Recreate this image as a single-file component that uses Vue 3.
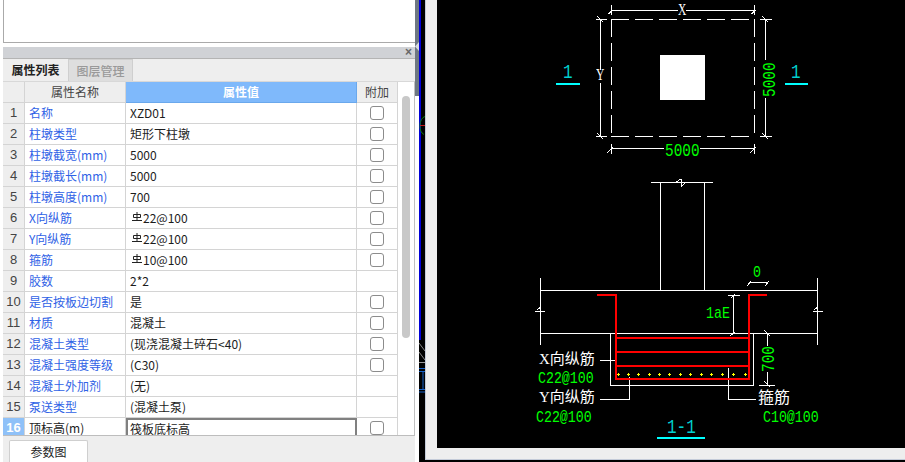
<script setup>
const rows = [
  ['名称', 'XZD01', true],
  ['柱墩类型', '矩形下柱墩', true],
  ['柱墩截宽(mm)', '5000', true],
  ['柱墩截长(mm)', '5000', true],
  ['柱墩高度(mm)', '700', true],
  ['X向纵筋', '22@100', true, true],
  ['Y向纵筋', '22@100', true, true],
  ['箍筋', '10@100', true, true],
  ['胶数', '2*2', false],
  ['是否按板边切割', '是', true],
  ['材质', '混凝土', true],
  ['混凝土类型', '(现浇混凝土碎石<40)', true],
  ['混凝土强度等级', '(C30)', true],
  ['混凝土外加剂', '(无)', false],
  ['泵送类型', '(混凝土泵)', false],
  ['顶标高(m)', '筏板底标高', true],
]
const dots = [618, 628, 638, 649, 659, 669, 680, 690, 701, 711, 722, 733, 745]
const labels = [
  { t: '1', x: 563, y: 63, c: 'cy' },
  { t: '1', x: 791, y: 63, c: 'cy' },
  { t: '1-1', x: 667, y: 418, c: 'cy' },
  { t: 'X', x: 678, y: 2, c: 'ltr' },
  { t: 'Y', x: 596, y: 67, c: 'ltr' },
  { t: '5000', x: 665, y: 142, c: 'g18' },
  { t: '5000', x: 761, y: 97, c: 'g18 rot' },
  { t: '0', x: 753, y: 264, c: 'g17' },
  { t: '1aE', x: 706, y: 305, c: 'g17' },
  { t: '700', x: 760, y: 372, c: 'g18 rot' },
  { t: 'X向纵筋', x: 539, y: 352, c: 'lab' },
  { t: 'C22@100', x: 538, y: 370, c: 'g17' },
  { t: 'Y向纵筋', x: 539, y: 390, c: 'lab' },
  { t: 'C22@100', x: 536, y: 409, c: 'g17' },
  { t: '箍筋', x: 758, y: 390, c: 'lab big' },
  { t: 'C10@100', x: 763, y: 409, c: 'g17' },
]
</script>

<template>
  <div class="page">
    <div class="left">
      <div class="topbox"></div>
      <div class="panel">
        <div class="titlebar"><span class="close">×</span></div>
        <div class="tabs">
          <div class="tab active">属性列表</div>
          <div class="tab">图层管理</div>
        </div>
        <div class="tablewrap">
          <div class="grid">
            <div class="row head">
              <div class="c num"></div>
              <div class="c name">属性名称</div>
              <div class="c val sel">属性值</div>
              <div class="c add">附加</div>
            </div>
            <div v-for="(r, i) in rows" :key="i" class="row" :class="{ last: i === 15 }">
              <div class="c num">{{ i + 1 }}</div>
              <div class="c name">{{ r[0] }}</div>
              <div class="c val">
                <svg v-if="r[3]" class="steel" width="10" height="10" viewBox="0 0 10 10">
                  <path d="M1.500 2.500h7v3h-7zM5 0v8M0 8.500h10" fill="none" stroke="#222" stroke-width="1"/>
                </svg>{{ r[1] }}
              </div>
              <div class="c add"><span v-if="r[2]" class="cb"></span></div>
            </div>
          </div>
          <div class="scroll"><div class="thumb"></div></div>
        </div>
        <div class="bottom"><div class="btab">参数图</div></div>
      </div>
    </div>
    <div class="splitter">
      <div class="splitcap">
        <svg width="4" height="9" viewBox="0 0 4 9"><path d="M4 0v9L0 4.500z" fill="#d8dce0"/></svg>
      </div>
    </div>
    <div class="behind">
      <div class="blue"></div>
      <svg class="bits" width="6" height="462" viewBox="0 0 6 462">
        <path d="M6 116.500a6 9 0 0 0-5 9 6 9 0 0 0 4 9" fill="none" stroke="#0a7d14"/>
        <path d="M1 125.500h5" stroke="#c21818"/>
        <path d="M0 343l6 8M0 352l6 8" stroke="#888"/>
        <path d="M0 362.500h6" stroke="#999"/>
        <path d="M0 368.500h6M0 371.500h6M4 371v19M0 389.500h6M0 392h6" stroke="#1560c8" fill="none"/>
      </svg>
    </div>
    <div class="frame">
      <div class="view">
        <svg class="cad" width="468" height="448" viewBox="437 0 468 448" shape-rendering="crispEdges">
          <g stroke="#fff" fill="none" stroke-width="1">
            <!-- plan: dashed outline -->
            <g stroke-dasharray="18 6">
              <path d="M611 19.500H755M611 136.500H755M611.500 19V137M754.500 19V137"/>
            </g>
            <rect x="660" y="55" width="45" height="45" fill="#fff" stroke="none"/>
            <!-- plan: dimensions -->
            <path d="M611.500 5v10M754.500 5v10M611 10.500H678M686 10.500H755"/>
            <path d="M608.500 14l4-4M751.500 14l4-4"/>
            <path d="M596 19.500h11M596 136.500h11M600.500 20V70M600.500 83V136"/>
            <path d="M597 16l6 6M597 133l6 6"/>
            <path d="M760 19.500h12M760 136.500h12M765.500 20V60M765.500 98V136"/>
            <path d="M762 16l6 6M762 133l6 6"/>
            <path d="M611.500 144v10M754.500 144v10M611 148.500H664M700 148.500H755"/>
            <path d="M607 153l6-6M750 153l6-6"/>
            <!-- section: column -->
            <path d="M651 182.500H713M660.500 183V290M704.500 183V290"/>
            <path d="M676 182l5-3M681 179v8M681 187l4-4" stroke-width="1"/>
            <!-- section: slab -->
            <path d="M540.500 278V345M817.500 278V345M541 290.500H817M541 333.500H817"/>
            <path d="M535 311.500h10M537 310l4-3M813 311.500h10M814 310l4-3"/>
            <path d="M610.500 333V385.500H753.500V333"/>
            <!-- dimension 0 -->
            <path d="M749 282.500h19M747 286l4-5M765 286l4-5"/>
            <!-- dimension 1aE -->
            <path d="M728 295.500h12M733.500 296V333"/>
            <path d="M731 298l4-4M730 336l5-4"/>
            <!-- leaders -->
            <path d="M600 360.500H616M600 399.500H629.500V377"/>
            <path d="M728.500 368V399.500H756"/>
            <!-- dimension 700 -->
            <path d="M767.500 333V346M767.500 372V385M759 385.500H775M764 330l6 6M764 381l6 6"/>
          </g>
          <!-- red rebar -->
          <g stroke="#f00" fill="none" stroke-width="2">
            <path d="M597 295H616V379H749V295H767"/>
            <path d="M616 338H749M616 352H749M616 366H749"/>
          </g>
          <g fill="#ff0">
            <path v-for="x in dots" :key="x" :d="`M${x - 1} 374h1v-1h1v1h1v1h-1v1h-1v-1h-1z`"/>
          </g>
          <!-- cyan section marks -->
          <g fill="#00ffff">
            <rect x="556" y="83" width="24" height="2"/>
            <rect x="785" y="83" width="23" height="2"/>
            <rect x="657" y="437" width="48" height="2"/>
          </g>
        </svg>
        <span
          v-for="(l, i) in labels"
          :key="i"
          class="t"
          :class="l.c"
          :style="{ left: l.x - 437 + 'px', top: l.y + 'px' }"
        >{{ l.t }}</span>
      </div>
    </div>
  </div>
</template>

<style>
html, body { margin: 0; background: #000; }
</style>

<style scoped>
.page {
  width: 905px;
  height: 462px;
  display: flex;
  overflow: hidden;
  background: #000;
  font-family: "Noto Sans CJK SC", "Liberation Sans", sans-serif;
  font-size: 12px;
}
.left {
  width: 415px;
  height: 462px;
  flex: none;
  background: #fff;
  padding-left: 3px;
  box-sizing: border-box;
}
.topbox {
  height: 42px;
  background: #fff;
  border-left: 1px solid #aaa;
  border-bottom: 1px solid #aaa;
}
.panel { margin-top: 4px; background: #eeeeee; height: 415px; }
.titlebar {
  height: 11px;
  background: #d0d2d6;
  border-bottom: 1px solid #b4b4b4;
  display: flex;
  justify-content: flex-end;
  align-items: center;
  padding-right: 3px;
}
.close { font: bold 12px/11px "Liberation Sans", sans-serif; color: #666; }
.tabs { display: flex; height: 22px; background: #eeeeee; }
.tab {
  width: 65px;
  text-align: center;
  line-height: 22px;
  font-size: 12px;
  font-weight: 500;
  color: #999;
  background: #dedede;
  border: 1px solid #cfcfcf;
  border-bottom: 0;
  box-sizing: border-box;
}
.tab.active {
  background: #eeeeee;
  color: #222;
  border: 0;
  font-weight: 700;
}
.tablewrap {
  display: flex;
  width: 412px;
  height: 355px;
  background: #fff;
  border-top: 1px solid #d8d8d8;
  border-right: 1px solid #c0c0c0;
  border-bottom: 1px solid #bdbdbd;
  box-sizing: border-box;
  overflow: hidden;
}
.grid { width: 395px; flex: none; }
.row {
  display: grid;
  grid-template-columns: 22px 101px 231px 41px;
  height: 21px;
  box-sizing: border-box;
}
.c {
  border-right: 1px solid #d4d4d4;
  border-bottom: 1px solid #d4d4d4;
  box-sizing: border-box;
  line-height: 20px;
  white-space: nowrap;
  overflow: hidden;
  color: #222;
}
.num {
  background: #eeeeee;
  text-align: center;
  color: #444;
  font-size: 13px;
  font-family: "Liberation Sans", sans-serif;
}
.name { color: #2f62e6; padding-left: 4px; }
.val { padding-left: 4px; color: #1c1c1c; }
.add { text-align: center; display: flex; align-items: center; justify-content: center; }
.head .c { background: #eeeeee; color: #444; text-align: center; padding: 0; }
.head .val.sel {
  background: #7fb9fb;
  color: #fff;
  font-weight: 700;
  border-color: #6aa8ec;
}
.cb {
  width: 12px;
  height: 12px;
  border: 1px solid #8c8c8c;
  border-radius: 3px;
  background: #fff;
  display: block;
}
.steel { margin: 0 1px 5px 2px; vertical-align: middle; }
.last { height: 19px; }
.last .c { border-bottom: 0; }
.last .num { background: #8fc1f8; color: #fff; font-weight: 700; }
.last .name { color: #222; }
.last .val { border: 2px solid #808080; border-bottom: 0; border-right-width: 2px; padding-left: 2px; line-height: 18px; }
.scroll { flex: 1; padding: 14px 4px 0 4px; background: #fff; border-left: 1px solid #d4d4d4; margin-left: -1px; }
.thumb { width: 8px; height: 242px; background: #c8c8c8; border-radius: 4px; }
.bottom { padding: 4px 0 0 6px; height: 26px; box-sizing: border-box; }
.btab {
  width: 79px;
  height: 22px;
  text-align: center;
  line-height: 22px;
  background: #fff;
  border: 1px solid #cfcfcf;
  border-bottom: 0;
  border-radius: 2px 2px 0 0;
  box-sizing: border-box;
  color: #222;
}
.splitter { width: 4px; flex: none; background: #fff; }
.splitcap { height: 96px; background: #6e7883; padding-top: 42px; box-sizing: border-box; display: flex; align-items: flex-start; }
.behind { width: 6px; flex: none; background: #000; position: relative; }
.blue { position: absolute; left: 0; top: 0; width: 2px; height: 340px; background: #0000d8; }
.bits { position: absolute; left: 0; top: 0; }
.frame {
  flex: 1;
  height: 460px;
  background: #eeeeee;
  border-left: 1px solid #c4cbd8;
  border-bottom: 1px solid #c4cbd8;
  padding: 0 0 11px 11px;
  box-sizing: border-box;
  display: flex;
}
.view { flex: 1; background: #000; position: relative; overflow: hidden; }
.cad { position: absolute; left: 0; top: 0; }
.t {
  position: absolute;
  line-height: 1;
  white-space: nowrap;
  transform-origin: 0 0;
  font-family: "Liberation Mono", monospace;
}
.cy { color: #00d0d0; font-size: 20px; transform: scaleX(.8); }
.ltr { color: #fff; font-size: 16px; font-family: "Liberation Serif", serif; transform: scaleX(.72); }
.g18 { color: #00ff00; font-size: 18px; transform: scaleX(.8); }
.g17 { color: #00ff00; font-size: 17px; transform: scaleX(.78); }
.g18.rot { transform: rotate(-90deg) scaleX(.8); }
.lab { color: #fff; font-size: 15px; font-family: "Liberation Serif", "Noto Sans CJK SC", serif; }
.lab.big { font-size: 16px; }
</style>
